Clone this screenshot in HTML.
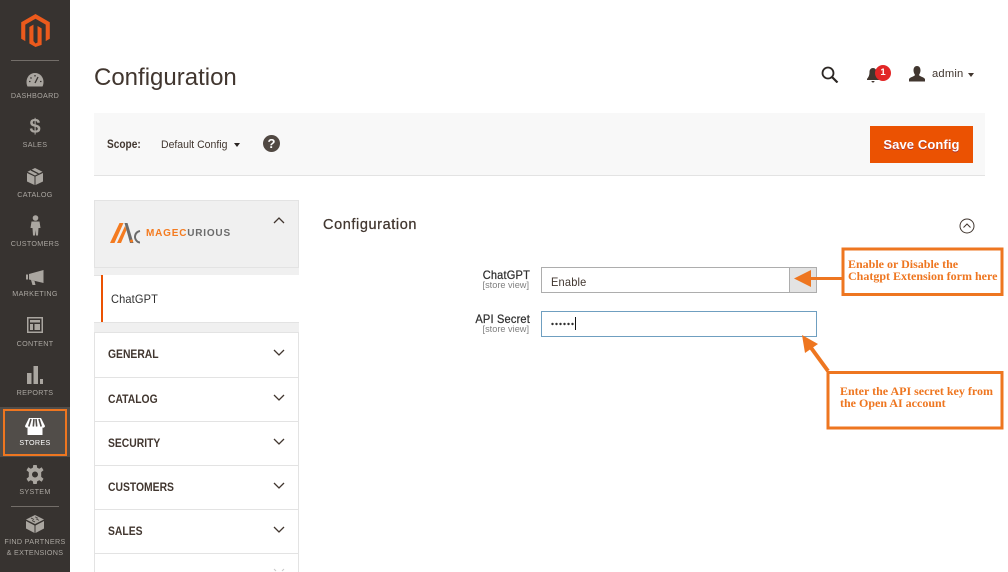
<!DOCTYPE html>
<html><head><meta charset="utf-8"><style>
html,body{margin:0;padding:0;background:#fff}
body{width:1008px;height:572px;position:relative;overflow:hidden;font-family:"Liberation Sans",sans-serif;color:#303030}
.a{position:absolute;white-space:nowrap}
#side{position:absolute;left:0;top:0;width:70px;height:572px;background:#373330}
.n{position:absolute;left:0;width:70px;text-align:center;font-size:7.2px;letter-spacing:.3px;color:#aaa6a0;line-height:11px}
.sep{position:absolute;left:11px;width:48px;height:1px;background:#736e69}
.h{position:absolute;left:95px;width:203px;height:43px;border-bottom:1px solid #e3e3e3}
.h span{position:absolute;left:13px;top:15px;font-size:11.5px;font-weight:bold;color:#41362f;line-height:14px;transform:scaleX(.9);transform-origin:left center}
.h svg{position:absolute;left:178px;top:15px}
.l{transform:scaleX(.92);transform-origin:left center}
.r{transform:scaleX(.92);transform-origin:right center}
</style></head><body>
<div id="side">
<svg class="a" style="left:19px;top:14px" width="33" height="33" viewBox="0 0 24 24"><path fill="#ec5a1c" d="M12 24l-4.455-2.572v-12l2.97-1.715v12.002L12 21.43l1.485-.715V8.713l2.97 1.715v12zM22.391 6v12l-2.969 1.714V7.713L12 3.43 4.578 7.713v12.001L1.609 18V6L12 0z"/></svg>
<div class="sep" style="top:60px"></div>
<svg class="a" style="left:26px;top:72px" width="18" height="15" viewBox="0 0 18 15"><path fill="#aaa6a0" d="M9 1C4 1 .5 5 .5 10C.5 12 1 13.500 1.500 14.500H16.500C17 13.500 17.500 12 17.500 10C17.500 5 14 1 9 1Z"/><path stroke="#373330" stroke-width="1.300" fill="none" d="M9 11L12 5M3 9.500H4.500M4.500 5.500L5.500 6.500M9 3V4.500M14 9.500H15.500"/></svg>
<div class="n" style="top:90px">DASHBOARD</div>
<div class="a" style="left:0;width:70px;text-align:center;top:116px;font-size:20px;font-weight:bold;color:#aaa6a0;line-height:22px">$</div>
<div class="n" style="top:139px">SALES</div>
<svg class="a" style="left:27px;top:168px" width="16" height="17" viewBox="0 0 16 17"><path fill="#aaa6a0" d="M0 5L7.500 8.500V17L0 13.500ZM16 5L8.500 8.500V17L16 13.500ZM8 0L15.500 3.800L8 7.500L.5 3.800Z"/><path stroke="#373330" stroke-width="1.300" d="M4 2L11.500 5.800"/></svg>
<div class="n" style="top:189px">CATALOG</div>
<svg class="a" style="left:30px;top:215px" width="11" height="21" viewBox="0 0 11 21"><circle cx="5.500" cy="3" r="2.800" fill="#aaa6a0"/><path fill="#aaa6a0" d="M1.500 6.500H9.500L10.500 13H8.500L8 20.500H6L5.500 15L5 20.500H3L2.500 13H.5Z"/></svg>
<div class="n" style="top:238px">CUSTOMERS</div>
<svg class="a" style="left:26px;top:270px" width="18" height="15" viewBox="0 0 18 15"><path fill="#aaa6a0" d="M0 4.500H2V9.500H0ZM3 4L17.500 0V13L3 9.500ZM5 10L8.500 11L9.500 15H6.500Z"/></svg>
<div class="n" style="top:288px">MARKETING</div>
<svg class="a" style="left:27px;top:317px" width="16" height="16" viewBox="0 0 16 16"><path fill="#aaa6a0" fill-rule="evenodd" d="M0 0H16V16H0ZM1.500 1.500V14.500H14.500V1.500Z"/><path fill="#aaa6a0" d="M3 3H13V5.500H3ZM3 7H6V13H3ZM7.500 7H13V13H7.500Z"/></svg>
<div class="n" style="top:338px">CONTENT</div>
<svg class="a" style="left:27px;top:366px" width="16" height="18" viewBox="0 0 16 18"><path fill="#aaa6a0" d="M0 7H4.500V18H0ZM6.500 0H11V18H6.500ZM13 13H16V18H13Z"/></svg>
<div class="n" style="top:387px">REPORTS</div>
<div class="a" style="left:0;top:407px;width:70px;height:50px;background:#514d49"></div>
<div class="a" style="left:3px;top:409px;width:60px;height:43px;border:2.500px solid #ee7620"></div>
<svg class="a" style="left:25px;top:418px" width="20" height="17" viewBox="0 0 20 17"><path fill="#fff" d="M4 0H16L20 8C20 9.500 18 10 17.500 9.500V17H2.500V9.500C2 10 0 9.500 0 8Z"/><path stroke="#514d49" stroke-width="1.600" d="M6 1L3.800 8.500M9 1L8.300 8.500M11 1L11.700 8.500M14 1L16.200 8.500"/></svg>
<div class="n" style="top:437px;color:#fff">STORES</div>
<svg class="a" style="left:26px;top:465px" width="18" height="19" viewBox="0 0 18 19"><path fill="#aaa6a0" fill-rule="evenodd" d="M7.300 0H10.700L11.200 2.800L13.300 3.800L15.700 2.300L17.500 5.300L15.200 7.100V9.500V11.900L17.500 13.700L15.700 16.700L13.300 15.200L11.200 16.200L10.700 19H7.300L6.800 16.200L4.700 15.200L2.300 16.700L.5 13.700L2.800 11.900V7.100L.5 5.300L2.300 2.300L4.700 3.800L6.800 2.800ZM9 6.500A3 3 0 1 0 9 12.500A3 3 0 1 0 9 6.500Z"/></svg>
<div class="n" style="top:486px">SYSTEM</div>
<div class="sep" style="top:506px"></div>
<svg class="a" style="left:26px;top:515px" width="18" height="18" viewBox="0 0 18 18"><path fill="#aaa6a0" d="M9 0L18 4.500L9 9L0 4.500ZM0 6L8.500 10.500V18L0 13.500ZM18 6L9.500 10.500V18L18 13.500Z"/><path stroke="#373330" stroke-width=".8" fill="none" d="M5 3L8 4.500M9 1.800L12 3.300M6 5.500L9 7M10 3.800L13 5.300"/></svg>
<div class="n" style="top:536px">FIND PARTNERS</div>
<div class="n" style="top:547px">&amp; EXTENSIONS</div>
</div>

<div class="a" style="left:94px;top:63px;font-size:24px;line-height:30px;color:#41362f">Configuration</div>
<svg class="a" style="left:821px;top:66px" width="18" height="17" viewBox="0 0 18 17"><circle cx="7" cy="7" r="5.500" fill="none" stroke="#2b2623" stroke-width="1.800"/><path d="M11 11L16.500 16.500" stroke="#2b2623" stroke-width="2.200"/></svg>
<svg class="a" style="left:866px;top:68px" width="14" height="15" viewBox="0 0 14 15"><path fill="#41362f" d="M7 0C9 0 10.500 1.500 10.500 4C10.500 8 12 9.500 13 11V12H1V11C2 9.500 3.500 8 3.500 4C3.500 1.500 5 0 7 0ZM5.500 13H8.500C8.500 14 8 14.500 7 14.500C6 14.500 5.500 14 5.500 13Z"/></svg>
<div class="a" style="left:875px;top:65px;width:16px;height:16px;border-radius:8px;background:#e22626;color:#fff;font-size:9.500px;font-weight:bold;text-align:center;line-height:16px">1</div>
<svg class="a" style="left:909px;top:66px" width="16" height="16" viewBox="0 0 16 16"><path fill="#41362f" d="M8 0C10.500 0 11.500 2 11.500 4.500C11.500 6.500 10.500 8 10 9C10.500 10.500 15 11 16 13V15.500H0V13C1 11 5.500 10.500 6 9C5.500 8 4.500 6.500 4.500 4.500C4.500 2 5.500 0 8 0Z"/></svg>
<div class="a" style="left:932px;top:67px;font-size:11.200px;line-height:14px;color:#41362f;letter-spacing:.2px">admin</div>
<div class="a" style="left:968px;top:73px;border:3px solid transparent;border-top:4px solid #41362f;border-bottom:0"></div>

<div class="a" style="left:94px;top:113px;width:891px;height:62px;background:#f8f8f8;border-bottom:1px solid #e3e3e3"></div>
<div class="a" style="left:107px;top:138px;font-size:11.500px;font-weight:bold;line-height:14px;color:#41362f;transform:scaleX(.88);transform-origin:left center">Scope:</div>
<div class="a l" style="left:161px;top:138px;font-size:11.400px;line-height:14px;color:#41362f">Default Config</div>
<div class="a" style="left:234px;top:143px;border:3px solid transparent;border-top:4px solid #2b2623;border-bottom:0"></div>
<div class="a" style="left:263px;top:135px;width:17px;height:17px;border-radius:9px;background:#514943;color:#fff;font-size:13px;font-weight:bold;text-align:center;line-height:17px">?</div>
<div class="a" style="left:870px;top:126px;width:103px;height:37px;background:#eb5202;color:#fff;font-size:13px;font-weight:bold;text-align:center;line-height:37px;letter-spacing:.1px;text-shadow:0 1px 0 #a33">Save Config</div>

<div class="a" style="left:94px;top:200px;width:203px;height:66px;background:#f0f0f0;border:1px solid #e3e3e3"></div>
<svg class="a" style="left:110px;top:222px" width="32" height="22" viewBox="0 0 32 22"><path fill="#f47b20" d="M0 21L9.500 1H13.500L4.500 21ZM7 21L15 4L16.500 8L11 21Z"/><path fill="#6b6b6b" d="M14.500 1H17.500L23.500 21H20Z"/><path fill="none" stroke="#6b6b6b" stroke-width="2" d="M30 9C25 10 24 15 26 18C27 19.500 28.500 20.500 30 20.500"/><circle cx="21.500" cy="19" r="1.500" fill="#f47b20"/></svg>
<div class="a" style="left:146px;top:227px;font-size:10px;font-weight:bold;line-height:14px;letter-spacing:.8px;color:#6b6b6b"><span style="color:#f47b20">MAGE</span><span style="color:#f47b20">C</span>URIOUS</div>
<svg class="a" style="left:273px;top:216px" width="12" height="9" viewBox="0 0 12 9"><path d="M1 7L6 2L11 7" fill="none" stroke="#41362f" stroke-width="1.300"/></svg>
<div class="a" style="left:94px;top:268px;width:205px;height:8px;background:#f0f0f0;border-bottom:1px solid #e3e3e3;box-sizing:border-box"></div>
<div class="a" style="left:101px;top:275px;width:198px;height:48px;background:#fff"></div>
<div class="a" style="left:101px;top:275px;width:2px;height:48px;background:#eb5202"></div>
<div class="a l" style="left:111px;top:292px;font-size:12px;line-height:14px;color:#303030;letter-spacing:.15px">ChatGPT</div>
<div class="a" style="left:94px;top:322px;width:205px;height:11px;background:#f0f0f0;border-top:1px solid #e3e3e3;border-bottom:1px solid #e3e3e3;box-sizing:border-box"></div>
<div class="a" style="left:94px;top:333px;width:1px;height:239px;background:#e3e3e3"></div>
<div class="a" style="left:298px;top:333px;width:1px;height:239px;background:#e3e3e3"></div>
<div class="h" style="top:333px;height:44px"><span>GENERAL</span><svg width="12" height="9" viewBox="0 0 12 9"><path d="M1 2L6 7L11 2" fill="none" stroke="#41362f" stroke-width="1.300"/></svg></div>
<div class="h" style="top:378px;height:43px"><span>CATALOG</span><svg width="12" height="9" viewBox="0 0 12 9"><path d="M1 2L6 7L11 2" fill="none" stroke="#41362f" stroke-width="1.300"/></svg></div>
<div class="h" style="top:422px"><span>SECURITY</span><svg width="12" height="9" viewBox="0 0 12 9"><path d="M1 2L6 7L11 2" fill="none" stroke="#41362f" stroke-width="1.300"/></svg></div>
<div class="h" style="top:466px"><span>CUSTOMERS</span><svg width="12" height="9" viewBox="0 0 12 9"><path d="M1 2L6 7L11 2" fill="none" stroke="#41362f" stroke-width="1.300"/></svg></div>
<div class="h" style="top:510px"><span>SALES</span><svg width="12" height="9" viewBox="0 0 12 9"><path d="M1 2L6 7L11 2" fill="none" stroke="#41362f" stroke-width="1.300"/></svg></div>
<svg class="a" style="left:273px;top:568px" width="12" height="4" viewBox="0 0 12 4"><path d="M1 1L3 3M11 1L9 3" fill="none" stroke="#c8c8c8" stroke-width="1"/></svg>

<div class="a" style="left:323px;top:216px;font-size:14.500px;line-height:18px;color:#41362f;letter-spacing:.6px;-webkit-text-stroke:.25px #41362f">Configuration</div>
<svg class="a" style="left:959px;top:218px" width="16" height="16" viewBox="0 0 16 16"><circle cx="8" cy="8" r="7" fill="none" stroke="#41362f" stroke-width="1"/><path d="M4.500 9.500L8 6L11.500 9.500" fill="none" stroke="#41362f" stroke-width="1"/></svg>

<div class="a r" style="left:430px;width:100px;text-align:right;top:268px;font-size:12px;line-height:14px;color:#303030;-webkit-text-stroke:.25px #303030;letter-spacing:.2px">ChatGPT</div>
<div class="a" style="left:429px;width:100px;text-align:right;top:280px;font-size:9.200px;line-height:11px;color:#808080">[store view]</div>
<div class="a" style="left:541px;top:267px;width:276px;height:26px;box-sizing:border-box;background:#fff;border:1px solid #adadad"></div>
<div class="a" style="left:789px;top:267px;width:28px;height:26px;box-sizing:border-box;background:#e3e3e3;border:1px solid #adadad"></div>
<div class="a l" style="left:551px;top:275px;font-size:12px;line-height:14px;color:#41362f;letter-spacing:.2px">Enable</div>

<div class="a r" style="left:430px;width:100px;text-align:right;top:312px;font-size:12px;line-height:14px;color:#303030;-webkit-text-stroke:.25px #303030;letter-spacing:.2px">API Secret</div>
<div class="a" style="left:429px;width:100px;text-align:right;top:324px;font-size:9.200px;line-height:11px;color:#808080">[store view]</div>
<div class="a" style="left:541px;top:311px;width:276px;height:26px;box-sizing:border-box;background:#fff;border:1px solid #6f9fc0"></div>
<svg class="a" style="left:551px;top:316px" width="30" height="15" viewBox="0 0 30 15"><g fill="#303030"><circle cx="1.500" cy="8" r="1.200"/><circle cx="5.500" cy="8" r="1.200"/><circle cx="9.500" cy="8" r="1.200"/><circle cx="13.500" cy="8" r="1.200"/><circle cx="17.500" cy="8" r="1.200"/><circle cx="21.500" cy="8" r="1.200"/></g><path d="M24.500 1V14" stroke="#111" stroke-width="1"/></svg>

<svg class="a" style="left:780px;top:240px" width="228" height="195" viewBox="0 0 228 195">
<path d="M25 38.500H63" stroke="#ee7620" stroke-width="3"/><path d="M14 38.500L31 30V47Z" fill="#ee7620"/>
<path d="M48 131L29 105" stroke="#ee7620" stroke-width="4"/><path d="M22 95L38 104L25 113Z" fill="#ee7620"/>
<rect x="63" y="9" width="159" height="45.500" fill="#fff" stroke="#ee7620" stroke-width="3"/>
<rect x="48" y="132.500" width="174" height="55.500" fill="#fff" stroke="#ee7620" stroke-width="3"/>
<g font-family="'Liberation Serif',serif" font-weight="bold" font-size="12" fill="#ee7620"><text x="68" y="28">Enable or Disable the</text><text x="68" y="40">Chatgpt Extension form here</text><text x="60" y="155">Enter the API secret key from</text><text x="60" y="167">the Open AI account</text></g>
</svg>
</body></html>
